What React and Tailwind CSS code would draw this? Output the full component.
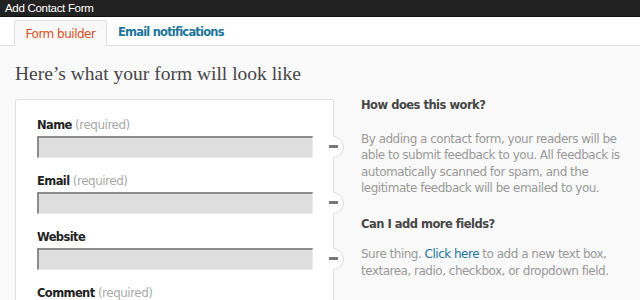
import React from 'react';

const fields = [
    { label: 'Name', required: true },
    { label: 'Email', required: true },
    { label: 'Website', required: false },
    { label: 'Comment', required: true },
];

function Field({ label, required }) {
    return (
        <div className="relative">
            <div className="h-[20px] text-[12px] leading-[20px] tracking-[-0.5px] text-[#222]">
                <span className="text-[11.5px] font-bold tracking-[-0.6px]">{label}</span>
                {required && <span className="text-[#aaa]"> (required)</span>}
            </div>
            <div className="mt-[1px] h-[22px] w-[276px] border-t-2 border-l-2 border-r border-b border-t-[#8c8c8c] border-l-[#8c8c8c] border-r-[#eaeaea] border-b-[#eaeaea] bg-[#dfdfdf]"></div>
            <div className="absolute left-[296px] top-[21px] h-[22px] w-[12px] overflow-hidden">
                <div className="absolute left-[-11px] top-0 h-[22px] w-[22px] rounded-full border border-[#dfdfdf] bg-white"></div>
            </div>
            <div className="absolute left-[292px] top-[30px] h-[3px] w-[9px] bg-[#7a7a7a]"></div>
        </div>
    );
}

export default function App() {
    return (
        <div className="h-[300px] w-[640px] overflow-hidden bg-[#f9f9f9] font-['DejaVu_Sans',sans-serif]">
            <div className="h-[17px] border-b border-[#111] bg-[#222] pl-[5px] font-['Liberation_Sans',Arial,sans-serif] text-[11.5px] leading-[16px] tracking-[-0.3px] text-white">
                Add Contact Form
            </div>
            <div className="flex h-[29px] items-end border-b border-[#dfdfdf] bg-white pl-[14px]">
                <div className="-mb-px flex h-[26px] w-[93px] items-center justify-center rounded-t-[3px] border border-b-0 border-[#dfdfdf] bg-[#f9f9f9] text-[12px] tracking-[-0.5px] text-[#d54e21]">
                    Form builder
                </div>
                <div className="flex h-[25px] items-center pl-[11px] text-[11.5px] font-bold tracking-[-0.8px] text-[#21759b]">
                    Email notifications
                </div>
            </div>
            <h1 className="pl-[15px] pt-[16px] font-['Liberation_Serif',Georgia,serif] text-[19.5px] leading-[24px] text-[#464646]">
                Here’s what your form will look like
            </h1>
            <div className="mt-[13px] flex items-start">
                <div className="ml-[15px] h-[240px] w-[319px] rounded-t-[3px] border border-[#dfdfdf] bg-white pl-[21px] pt-[15px]">
                    <div className="flex flex-col gap-[13px]">
                        {fields.map((f) => (
                            <Field key={f.label} {...f} />
                        ))}
                    </div>
                </div>
                <div className="-mt-[2px] ml-[27px] w-[272px] text-[12px] leading-[16.5px] tracking-[-0.5px] text-[#999]">
                    <h3 className="text-[11.5px] font-bold text-[#464646]">How does this work?</h3>
                    <p className="mt-[17px]">
                        By adding a contact form, your readers will be able to submit feedback to you. All feedback is automatically scanned for spam, and the legitimate feedback will be emailed to you.
                    </p>
                    <h3 className="mt-[19px] text-[11.5px] font-bold text-[#464646]">Can I add more fields?</h3>
                    <p className="mt-[14px]">
                        Sure thing. <span className="text-[#21759b]">Click here</span> to add a new text box, textarea, radio, checkbox, or dropdown field.
                    </p>
                </div>
            </div>
        </div>
    );
}
